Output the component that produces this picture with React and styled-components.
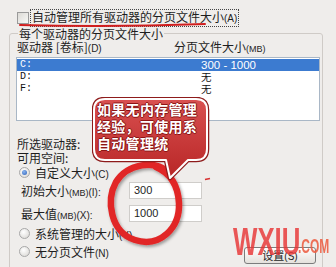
import React from "react";
import styled, { createGlobalStyle } from "styled-components";

const Global = createGlobalStyle`
  html, body { margin: 0; padding: 0; background: #efedeb; }
  body { font-family: "Noto Sans CJK SC", "DejaVu Sans", sans-serif; color: #1e1e1e; }
`;

const Page = styled.div`
  position: relative;
  width: 336px;
  height: 267px;
  overflow: hidden;
  background: #efedeb;
  font-size: 12px;
`;

const TopRow = styled.div`
  display: flex;
  align-items: center;
  padding: 9px 0 0 17px;
  height: 17px;
`;

const CheckBox = styled.span`
  width: 10px;
  height: 10px;
  border: 1px solid #9a9a9a;
  background: linear-gradient(135deg, #dcdad6, #f8f8f6);
  margin-right: 1px;
`;

const FocusLabel = styled.span`
  border: 1px dotted #444;
  padding: 0 1px;
  line-height: 14px;
  font-size: 12px;
  white-space: nowrap;
`;

const Small = styled.span`
  font-family: "Liberation Sans", sans-serif;
  font-size: ${(p) => p.$size || 10}px;
`;

const Group = styled.fieldset`
  margin: 1px 0 0 9px;
  width: 299px;
  padding: 0 6px 0 7px;
  border: 1px solid #cfcbc7;
  border-radius: 3px;
  min-width: 0;
`;

const Legend = styled.legend`
  padding: 0 1px;
  margin-left: 1px;
  font-size: 12px;
  line-height: 13px;
`;

const Header = styled.div`
  display: grid;
  grid-template-columns: 157px 1fr;
  height: 13px;
  line-height: 13px;
  font-size: 12px;
  white-space: nowrap;
`;

const List = styled.div`
  margin: 4px 0 0 -1px;
  width: 302px;
  height: 61px;
  border: 1px solid #a9b7c6;
  background: #fff;
  padding-top: 1px;
  box-sizing: content-box;
`;

const ListRow = styled.div`
  display: grid;
  grid-template-columns: 181px 1fr;
  align-items: center;
  height: 12px;
  line-height: 12px;
  padding-left: 3px;
  font-family: "Liberation Mono", monospace;
  font-size: 10px;
  background: ${(p) => (p.$selected ? "#3c7bd0" : "transparent")};
  color: ${(p) => (p.$selected ? "#fff" : "#111")};
`;

const Value = styled.span`
  font-family: "Liberation Sans", sans-serif;
  font-size: 11.5px;
  line-height: 12px;
  white-space: pre;
`;

const CJK = styled.span`
  font-family: "Noto Sans CJK SC", sans-serif;
  font-size: 10.5px;
  line-height: 12px;
  height: 12px;
`;

const Info = styled.div`
  margin-top: 16px;
  line-height: 14px;
  font-size: 12px;
`;

const RadioRow = styled.div`
  display: flex;
  align-items: center;
  gap: 5px;
  height: 13px;
  margin-top: ${(p) => p.$mt || 0}px;
  margin-left: 2px;
  font-size: 12px;
  white-space: nowrap;
`;

const Radio = styled.span`
  position: relative;
  width: 9px;
  height: 9px;
  border-radius: 50%;
  border: 1px solid #a8a8a8;
  background: radial-gradient(circle at 40% 35%, #ffffff, #d6d4d0);
  flex: none;
  &::after {
    content: "";
    display: ${(p) => (p.$on ? "block" : "none")};
    position: absolute;
    left: 2px;
    top: 2px;
    width: 5px;
    height: 5px;
    border-radius: 50%;
    background: radial-gradient(circle at 40% 35%, #8ab4ee, #2a5fb8);
  }
`;

const FieldRow = styled.div`
  display: grid;
  grid-template-columns: 108px 73px;
  align-items: center;
  margin-top: ${(p) => p.$mt || 0}px;
  padding-left: 4px;
  height: 17px;
  font-size: 12px;
  white-space: nowrap;
`;

const Input = styled.div`
  height: 15px;
  border: 1px solid #cfcdca;
  background: #fff;
  font-family: "Liberation Sans", sans-serif;
  font-size: 11px;
  line-height: 15px;
  padding-left: 4px;
`;

const BottomRow = styled.div`
  display: flex;
  justify-content: space-between;
  align-items: flex-start;
  margin-top: 5px;
  height: 24px;
`;

const Button = styled.div`
  width: 70px;
  height: 15px;
  margin-top: 2px;
  border: 1px solid #7c7c7c;
  border-radius: 3px;
  background: linear-gradient(#ffffff, #e4e1dc);
  text-align: center;
  font-size: 11px;
  line-height: 15px;
`;

const Overlay = styled.svg`
  position: absolute;
  left: ${(p) => p.$x}px;
  top: ${(p) => p.$y}px;
  overflow: visible;
  pointer-events: none;
`;

const Bubble = styled.div`
  position: absolute;
  left: 92px;
  top: 97px;
  width: 118px;
  height: 84px;
`;

const BubbleText = styled.div`
  position: absolute;
  left: 5px;
  top: 4px;
  width: 110px;
  font-size: 14px;
  font-weight: 700;
  line-height: 17px;
  letter-spacing: 0.3px;
  color: #fff;
  white-space: nowrap;
  text-shadow: 1px 0 0 #8c1414, -1px 0 0 #8c1414, 0 1px 0 #8c1414, 0 -1px 0 #8c1414;
`;

const Mark = styled.div`
  position: absolute;
  left: ${(p) => p.$x}px;
  top: ${(p) => p.$y}px;
  font-family: "Liberation Sans", sans-serif;
  font-weight: 700;
  font-size: ${(p) => p.$size}px;
  line-height: 1;
  color: ${(p) => p.$color};
  transform: scaleX(${(p) => p.$sx});
  transform-origin: left top;
  white-space: nowrap;
  pointer-events: none;
`;

export default function App() {
  return (
    <Page>
      <Global />
      <TopRow>
        <CheckBox />
        <FocusLabel>
          自动管理所有驱动器的分页文件大小<Small>(A)</Small>
        </FocusLabel>
      </TopRow>

      <Group>
        <Legend>每个驱动器的分页文件大小</Legend>
        <Header>
          <span>
            驱动器 [卷标]<Small>(D)</Small>
          </span>
          <span>
            分页文件大小<Small $size={9}>(MB)</Small>
          </span>
        </Header>
        <List>
          <ListRow $selected>
            <span>C:</span>
            <Value>300 - 1000</Value>
          </ListRow>
          <ListRow>
            <span>D:</span>
            <CJK>无</CJK>
          </ListRow>
          <ListRow>
            <span>F:</span>
            <CJK>无</CJK>
          </ListRow>
        </List>
        <Info>
          <div>所选驱动器:</div>
          <div>可用空间:</div>
        </Info>
        <RadioRow $mt={1}>
          <Radio $on />
          <span>
            自定义大小<Small>(C)</Small>
          </span>
        </RadioRow>
        <FieldRow $mt={3}>
          <span>
            初始大小<Small $size={9}>(MB)</Small><Small>(I):</Small>
          </span>
          <Input>300</Input>
        </FieldRow>
        <FieldRow $mt={6}>
          <span>
            最大值<Small $size={9}>(MB)</Small><Small>(X):</Small>
          </span>
          <Input>1000</Input>
        </FieldRow>
        <RadioRow $mt={5}>
          <Radio />
          <span>
            系统管理的大小<Small>(Y)</Small>
          </span>
        </RadioRow>
        <BottomRow>
          <RadioRow>
            <Radio />
            <span>
              无分页文件<Small>(N)</Small>
            </span>
          </RadioRow>
          <Button>
            设置<Small>(S)</Small>
          </Button>
        </BottomRow>
      </Group>

      <Overlay $x={0} $y={0} width="336" height="40" viewBox="0 0 336 40">
        <path d="M20 25 Q110 27.5 205 24" fill="none" stroke="#d01e1e" strokeWidth="2" strokeLinecap="round" />
      </Overlay>

      <Overlay $x={95} $y={155} width="120" height="100" viewBox="95 155 120 100">
        <defs>
          <filter id="sh" x="-20%" y="-20%" width="140%" height="140%">
            <feDropShadow dx="1.5" dy="2" stdDeviation="1.5" floodColor="#000" floodOpacity="0.35" />
          </filter>
        </defs>
        <path
          d="M168 172 C155 160 128 163 116 182 C106 200 110 232 135 240 C160 248 180 228 179 203 C178 185 170 173 156 167"
          fill="none"
          stroke="#e12626"
          strokeWidth="6.5"
          strokeLinecap="round"
          filter="url(#sh)"
        />
        <path d="M205 179.5 L210 178.5" stroke="#d83030" strokeWidth="1.5" />
      </Overlay>

      <Bubble>
        <svg width="118" height="84" viewBox="0 0 118 84" style={{ position: "absolute", left: 0, top: 0 }}>
          <defs>
            <linearGradient id="bg" x1="0" y1="0" x2="0" y2="1">
              <stop offset="0" stopColor="#d95050" />
              <stop offset="1" stopColor="#b82626" />
            </linearGradient>
          </defs>
          <path
            d="M13 2 H104 Q115 2 115 13 V52 Q115 63 104 63 H96 L78 81 L74 63 H13 Q2 63 2 52 V13 Q2 2 13 2 Z"
            fill="none"
            stroke="#8e1b1b"
            strokeWidth="4.5"
            strokeLinejoin="round"
          />
          <path
            d="M13 2 H104 Q115 2 115 13 V52 Q115 63 104 63 H96 L78 81 L74 63 H13 Q2 63 2 52 V13 Q2 2 13 2 Z"
            fill="url(#bg)"
            stroke="#ffffff"
            strokeWidth="2"
            strokeLinejoin="round"
          />
        </svg>
        <BubbleText>
          <div>如果无内存管理</div>
          <div>经验，可使用系</div>
          <div>自动管理统</div>
        </BubbleText>
      </Bubble>

      <Mark $x={233} $y={223} $size={38} $color="rgba(232, 52, 52, 0.82)" $sx={0.68}>
        WXIU
      </Mark>
      <Mark $x={298} $y={236} $size={20} $color="rgba(236, 96, 70, 0.9)" $sx={0.6}>
        .COM
      </Mark>
    </Page>
  );
}
